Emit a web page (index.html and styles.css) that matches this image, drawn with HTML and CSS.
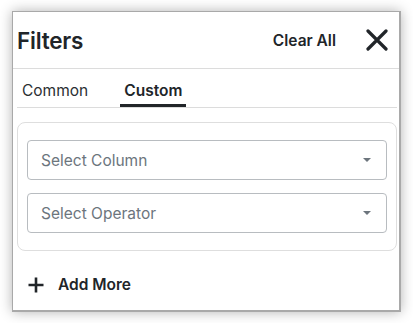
FILE: index.html
```html
<!DOCTYPE html>
<html>
<head>
<meta charset="utf-8">
<link rel="stylesheet" href="styles.css">
</head>
<body>
<div class="panel">
  <div class="header">
    <h1 class="title">Filters</h1>
    <div class="actions">
      <button class="clear">Clear All</button>
      <button class="close" aria-label="Close">
        <svg width="22" height="22" viewBox="0 0 22 22"><path d="M2 2 L20 20 M20 2 L2 20" stroke="#212529" stroke-width="3.2" stroke-linecap="round" fill="none"/></svg>
      </button>
    </div>
  </div>
  <div class="body">
    <div class="tabs">
      <div class="tab">Common</div>
      <div class="tab active">Custom</div>
    </div>
    <div class="card">
      <div class="select"><span>Select Column</span><span class="caret"></span></div>
      <div class="select"><span>Select Operator</span><span class="caret"></span></div>
    </div>
    <button class="add">
      <svg width="16" height="16" viewBox="0 0 16 16"><path d="M8 0.5 V15.5 M0.5 8 H15.5" stroke="#212529" stroke-width="2.6" fill="none"/></svg>
      <span>Add More</span>
    </button>
  </div>
</div>
</body>
</html>
```

FILE: styles.css
```css
html, body {
  margin: 0;
  padding: 0;
  background: #ffffff;
}
body {
  padding: 11px 12px;
  font-family: Inter, "Noto Sans", sans-serif;
  color: #212529;
}
.panel {
  width: 389px;
  height: 301px;
  box-sizing: border-box;
  border: 1px solid #a9a9a9;
  border-right-width: 2px;
  border-bottom-width: 2px;
  background: #fff;
  box-shadow: 0 0 12px rgba(0, 0, 0, 0.3);
  display: flex;
  flex-direction: column;
}
.header {
  height: 57px;
  box-sizing: border-box;
  border-bottom: 1px solid #dcdcdc;
  display: flex;
  align-items: center;
  justify-content: space-between;
  padding: 0 11px 0 4px;
}
.title {
  margin: 0;
  font-size: 22.5px;
  font-weight: 600;
  letter-spacing: -0.2px;
}
.actions {
  display: flex;
  align-items: center;
  gap: 30px;
}
button {
  font-family: inherit;
  background: none;
  border: none;
  padding: 0;
  color: #212529;
  cursor: pointer;
}
.clear {
  font-size: 15.5px;
  font-weight: 600;
}
.close {
  display: flex;
  width: 22px;
  height: 22px;
}
.body {
  padding: 0 2px 0 4px;
  display: flex;
  flex-direction: column;
}
.tabs {
  display: flex;
  gap: 27px;
  border-bottom: 1px solid #dcdcdc;
  height: 39px;
  box-sizing: border-box;
  align-items: flex-end;
}
.tab {
  font-size: 15.5px;
  padding: 0 5px 4px;
  color: #2b2f33;
  border-bottom: 3px solid transparent;
}
.tab.active {
  font-weight: 600;
  padding: 0 4px 4px;
  color: #212529;
  border-bottom-color: #212529;
}
.card {
  margin-top: 14px;
  border: 1px solid #dedede;
  border-radius: 8px;
  padding: 17px 9px;
  display: flex;
  flex-direction: column;
  gap: 13px;
}
.select {
  height: 40px;
  box-sizing: border-box;
  border: 1px solid #b8bcc0;
  border-radius: 4px;
  display: flex;
  align-items: center;
  justify-content: space-between;
  padding: 0 15px 0 13px;
  font-size: 15.5px;
  color: #6c757d;
}
.caret {
  width: 0;
  height: 0;
  border-left: 4px solid transparent;
  border-right: 4px solid transparent;
  border-top: 4px solid #6c757d;
}
.add {
  margin-top: 24px;
  margin-left: 11px;
  display: flex;
  align-items: center;
  gap: 14px;
  font-size: 15.5px;
  font-weight: 600;
}
```
